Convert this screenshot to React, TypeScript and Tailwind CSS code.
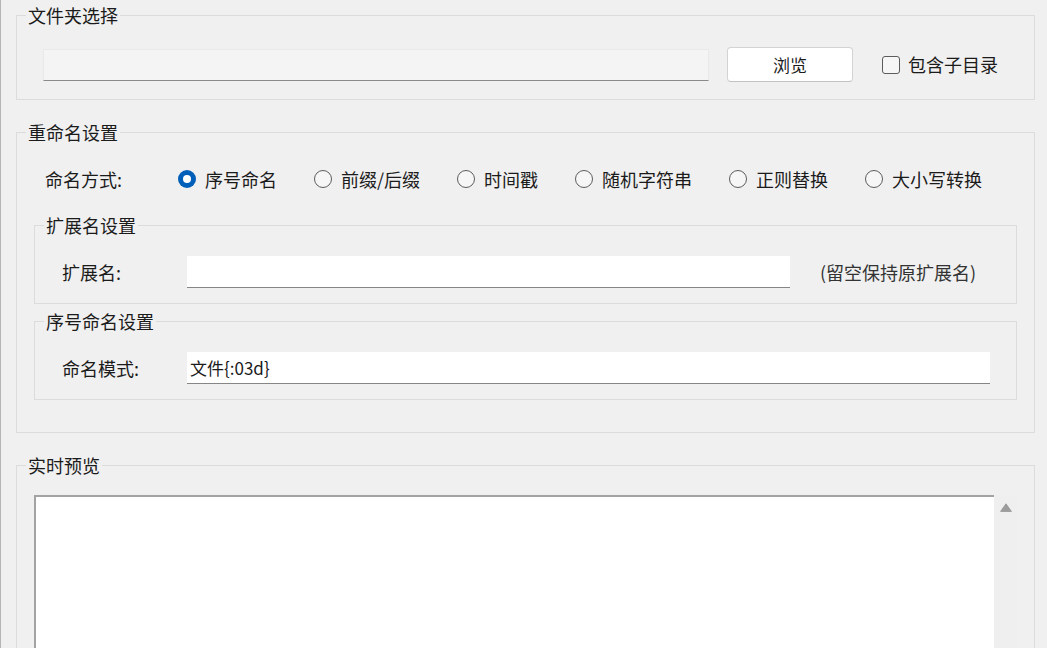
import React from 'react';

const modes = ['序号命名', '前缀/后缀', '时间戳', '随机字符串', '正则替换', '大小写转换'];

function Group({ title, className, children }: { title: string; className?: string; children: React.ReactNode }) {
  return (
    <fieldset className={`border border-[#dcdcdc] min-w-0 ${className ?? ''}`}>
      <legend className="ml-[9px] px-[2px] leading-[22px]">{title}</legend>
      {children}
    </fieldset>
  );
}

function Radio({ label, checked }: { label: string; checked?: boolean }) {
  return (
    <label className="flex items-center gap-[9px] whitespace-nowrap">
      {checked ? (
        <span className="w-[18px] h-[18px] rounded-full bg-[#005fb8] flex items-center justify-center">
          <span className="w-[8px] h-[8px] rounded-full bg-white" />
        </span>
      ) : (
        <span className="w-[18px] h-[18px] rounded-full border border-[#5c5c5c] bg-[#f6f6f6]" />
      )}
      <span>{label}</span>
    </label>
  );
}

export default function App() {
  return (
    <div className="h-[648px] overflow-hidden bg-[#f0f0f0] text-[#1b1b1b] text-[18px] font-['Microsoft_YaHei_UI','Noto_Sans_CJK_SC',sans-serif] pl-[15px] pr-[12px] pt-[4px] border-l border-[#b5b5b5]">
      {/* 文件夹选择 */}
      <Group title="文件夹选择">
        <div className="flex items-center h-[35px] mt-[21px] mb-[17px] pl-[26px]">
          <div className="w-[666px] h-[32px] bg-[#f4f4f4] border border-[#e9e9e9] border-b-[#8a8a8a]" />
          <button className="ml-[18px] w-[126px] h-[35px] bg-white border border-[#d3d3d3] border-b-[#c2c2c2] rounded-[4px] text-[17px]">
            浏览
          </button>
          <label className="ml-[29px] flex items-center gap-[8px]">
            <span className="w-[18px] h-[18px] rounded-[3px] border border-[#5c5c5c] bg-[#f6f6f6]" />
            <span>包含子目录</span>
          </label>
        </div>
      </Group>

      {/* 重命名设置 */}
      <Group title="重命名设置" className="mt-[21px]">
        <div className="px-[17px] pb-[32px]">
          <div className="flex items-center h-[24px] mt-[24px] pl-[11px]">
            <span className="w-[133px]">命名方式:</span>
            <div className="flex items-center gap-[37px]">
              {modes.map((m, i) => (
                <Radio key={m} label={m} checked={i === 0} />
              ))}
            </div>
          </div>

          <Group title="扩展名设置" className="mt-[23px]">
            <div className="flex items-center h-[32px] mt-[20px] mb-[15px] pl-[27px]">
              <span className="w-[125px]">扩展名:</span>
              <div className="w-[603px] h-[32px] bg-white border-b border-[#868686]" />
              <span className="ml-[30px] text-[#333]">(留空保持原扩展名)</span>
            </div>
          </Group>

          <Group title="序号命名设置" className="mt-[6px]">
            <div className="flex items-center h-[32px] mt-[20px] mb-[15px] pl-[27px] pr-[26px]">
              <span className="w-[125px] shrink-0">命名模式:</span>
              <div className="flex-1 h-[32px] bg-white border-b border-[#868686] flex items-center px-[3px] text-[17px]">
                文件{'{'}:03d{'}'}
              </div>
            </div>
          </Group>
        </div>
      </Group>

      {/* 实时预览 */}
      <Group title="实时预览" className="mt-[21px]">
        <div className="px-[17px] pt-[19px]">
          <div className="flex h-[300px]">
            <div className="flex-1 bg-white border-l-2 border-t-2 border-[#a3a3a3]" />
            <div className="w-[23px] bg-[#efefef] flex justify-center pt-[8px]">
              <svg width="12" height="9" viewBox="0 0 12 9">
                <path d="M6 0.8 L11.4 8.4 L0.6 8.4 Z" fill="#9c9c9c" stroke="#9c9c9c" strokeLinejoin="round" strokeWidth="1" />
              </svg>
            </div>
          </div>
        </div>
      </Group>
    </div>
  );
}
